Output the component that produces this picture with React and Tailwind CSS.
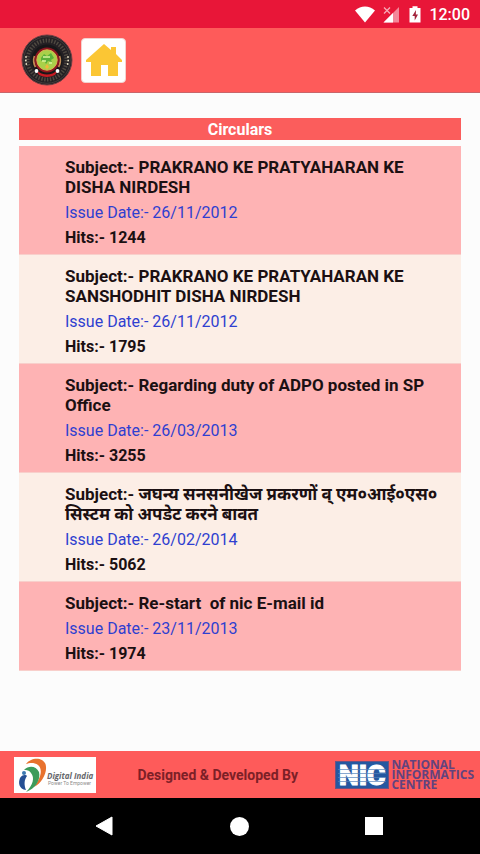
import React from 'react';

const circulars = [
  { subject: 'PRAKRANO KE PRATYAHARAN KE DISHA NIRDESH', date: '26/11/2012', hits: 1244 },
  { subject: 'PRAKRANO KE PRATYAHARAN KE SANSHODHIT DISHA NIRDESH', date: '26/11/2012', hits: 1795 },
  { subject: 'Regarding duty of ADPO posted in SP Office', date: '26/03/2013', hits: 3255 },
  { subject: 'जघन्य सनसनीखेज प्रकरणों व् एम०आई०एस० सिस्टम को अपडेट करने बावत', date: '26/02/2014', hits: 5062 },
  { subject: 'Re-start  of nic E-mail id', date: '23/11/2013', hits: 1974 },
];

function StatusBar() {
  return (
    <div className="flex h-7 items-center justify-end bg-[#e81638] pt-0.5 pr-2.5 text-white">
      <svg className="mr-1 h-5 w-6" viewBox="0 0 24 20" aria-hidden="true">
        <path d="M2 5.500C8 .3 16 .3 22 5.500L12 17.500Z" fill="#fff" />
      </svg>
      <svg className="mr-2 h-5 w-5" viewBox="0 0 20 20" aria-hidden="true">
        <path d="M18 2v15.500H2.500Z" fill="#f3879a" />
        <path d="M12 8v9.500H2.500Z" fill="#fff" />
        <path d="M3 2.500l6 6M9 2.500l-6 6" stroke="#f7a9b6" strokeWidth="1.3" />
      </svg>
      <svg className="mr-2 h-5 w-3" viewBox="0 0 12 20" aria-hidden="true">
        <path d="M.5 3h3V1.300h5V3h3v14.500H.5Z" fill="#fff" />
        <path d="M7 5L3.300 11h2.400v4.500L9 9.500H6.800Z" fill="#a3243c" />
      </svg>
      <span className="text-base leading-5 font-medium">12:00</span>
    </div>
  );
}

// Round department seal
function Emblem() {
  return (
    <svg className="size-[52px]" viewBox="0 0 52 52" role="img" aria-label="Department emblem">
      <circle cx="26" cy="26" r="25" fill="#242024" stroke="#6e4145" strokeWidth="1" />
      <circle cx="26" cy="26" r="23.3" fill="none" stroke="#55504b" strokeWidth=".6" />
      <circle cx="26" cy="26" r="19.5" fill="none" stroke="#736b59" strokeWidth="4" strokeDasharray="1.4 1.5" opacity=".55" />
      <g fill="#e8dfc4">
        <circle cx="5" cy="23" r=".9" />
        <circle cx="4.8" cy="26.5" r=".9" />
        <circle cx="5.3" cy="30" r=".9" />
        <circle cx="47" cy="23" r=".9" />
        <circle cx="47.2" cy="26.5" r=".9" />
        <circle cx="46.7" cy="30" r=".9" />
      </g>
      <circle cx="26" cy="26" r="15.5" fill="#171719" />
      <path d="M13.5 22a13.5 13.5 0 0 0 1 11M38.5 22a13.5 13.5 0 0 1-1 11" fill="none" stroke="#c28b55" strokeWidth="1.8" />
      <circle cx="26" cy="26" r="12.5" fill="#8e1620" />
      <path d="M15 36q11 9 22 0l-3 5q-8 4-16 0Z" fill="#c61b23" />
      <circle cx="26" cy="26" r="10.2" fill="#a9d04a" stroke="#d5bb4f" strokeWidth="1" />
      <path d="M20 24l3-4 3 2 4-3 3 5-3 2 1 2-4-1-2 3-2-4-3 1Z" fill="#5bb03a" />
      <path d="M22 23h7M21 27h4M28 29h3" stroke="#d9f39a" strokeWidth="1.3" />
      <path d="M24 33l2-3 2 3-2 2Z" fill="#f3b53b" />
      <circle cx="15.5" cy="37" r="1.9" fill="#fff" />
      <circle cx="36.5" cy="37" r="1.9" fill="#fff" />
    </svg>
  );
}

function Header() {
  return (
    <header className="flex h-[65px] items-center gap-2 border-b border-[#c9656a] bg-[#fe5b5a] pl-[21px]">
      <Emblem />
      <button type="button" aria-label="Home" className="flex size-[45px] items-center justify-center rounded border border-[#f2d3d0] bg-white">
        <svg className="size-9" viewBox="0 0 36 36" aria-hidden="true">
          <path d="M18 2L25 8V5h5v7l6 6v2h-4v14H22V23h-7v11H5V20H0v-2Z" fill="#fbc634" />
        </svg>
      </button>
    </header>
  );
}

function CircularRow({ item, odd }) {
  return (
    <li className={`border-b border-[#f8cfcb] pt-[11px] pr-3 pb-1.5 pl-[46px] ${odd ? 'bg-[#fceee6]' : 'bg-[#feb3b4]'}`}>
      <h2 className="whitespace-pre-wrap text-[17px] leading-5 font-bold">{`Subject:- ${item.subject}`}</h2>
      <p className="mt-1.5 text-[#2f3fd0]">{`Issue Date:- ${item.date}`}</p>
      <p className="mt-[5px] font-bold">{`Hits:- ${item.hits}`}</p>
    </li>
  );
}

function DigitalIndiaLogo() {
  return (
    <svg className="h-9 w-[82px]" viewBox="0 0 82 36" role="img" aria-label="Digital India">
      <rect width="82" height="36" fill="#fff" />
      <path d="M12 7C16 1 28-1 31.500 7C34 15 28 26 20 30C27 21 29 12 24 8C20 5 15 6 12 7Z" fill="#e8722e" />
      <path d="M10 13C15 8 22 9 25 15C27 23 21 32 12 35C19 28 21 21 17 16C15 13 13 13 10 13Z" fill="#3c9b5b" />
      <path d="M6 21C9 17 12 18 13 19C10 23 10 28 12 33C5 32 4 26 6 21Z" fill="#254f94" />
      <circle cx="10" cy="16" r="2" fill="#3c79b2" />
      <text x="33" y="22" fontSize="8" fontWeight="700" fontStyle="italic" fill="#66676b" fontFamily="Open Sans, sans-serif">Digital India</text>
      <text x="34" y="28" fontSize="5" fill="#8c8c8c" fontFamily="Roboto, sans-serif">Power To Empower</text>
    </svg>
  );
}

function NicLogo() {
  return (
    <div className="flex items-center gap-0.5">
      <svg className="h-7 w-[54px] overflow-visible" viewBox="0 0 54 28" role="img" aria-label="NIC">
        <rect width="54" height="28" fill="#2558a0" />
        <rect x=".5" y=".5" width="53" height="27" fill="none" stroke="#6a5384" />
        <text x="4" y="24" fontSize="28" fontWeight="900" fill="#fff" stroke="#fff" strokeWidth="1" fontFamily="Roboto, sans-serif">NIC</text>
        <path d="M3 8.500h48M3 12.500h48M3 16.500h48M3 20.500h48" stroke="#5583ba" strokeWidth=".7" />
      </svg>
      <p className="font-['Open_Sans',sans-serif] text-xs font-bold leading-[10px] text-[#62437f]">
        NATIONAL
        <br />
        INFORMATICS
        <br />
        CENTRE
      </p>
    </div>
  );
}

const App = () => {
  return (
    <div className="flex min-h-screen flex-col bg-[#fcfcfc] font-[Roboto,'Noto_Sans',sans-serif] text-[#1b1012]">
      <StatusBar />
      <Header />
      <main className="flex-1 px-[19px] pt-[25px] pb-8">
        <h1 className="bg-[#fb5d5c] pt-0.5 text-center text-base leading-5 font-bold text-white">Circulars</h1>
        <ul className="mt-1.5 text-base leading-5">
          {circulars.map((item, i) => (
            <CircularRow key={i} item={item} odd={i % 2 === 1} />
          ))}
        </ul>
      </main>
      <footer className="flex h-[47px] items-center justify-between bg-[#fe5b5a] pr-1.5 pl-3.5">
        <DigitalIndiaLogo />
        <p className="pl-1 text-sm font-bold text-[#7c2027]">Designed &amp; Developed By</p>
        <NicLogo />
      </footer>
      <nav className="flex h-14 items-center justify-center gap-[116px] bg-black pr-1">
        <button type="button" aria-label="Back">
          <svg className="size-5" viewBox="0 0 20 20" aria-hidden="true">
            <path d="M2 10L18 1V19Z" fill="#fff" stroke="#fff" strokeLinejoin="round" />
          </svg>
        </button>
        <button type="button" aria-label="Home screen" className="size-[19px] rounded-full bg-white" />
        <button type="button" aria-label="Recent apps" className="size-[18px] bg-white" />
      </nav>
    </div>
  );
};

export default App;
